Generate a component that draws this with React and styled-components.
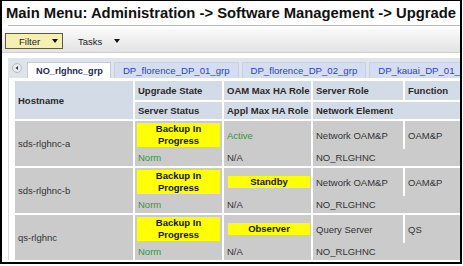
import React from "react";
import styled, { createGlobalStyle } from "styled-components";

const rows = [
  { host: "sds-rlghnc-a", role: "Active", serverRole: "Network OAM&P", fn: "OAM&P" },
  { host: "sds-rlghnc-b", role: "Standby", serverRole: "Network OAM&P", fn: "OAM&P" },
  { host: "qs-rlghnc", role: "Observer", serverRole: "Query Server", fn: "QS" },
];

const tabs = ["NO_rlghnc_grp", "DP_florence_DP_01_grp", "DP_florence_DP_02_grp", "DP_kauai_DP_01_grp"];

const GlobalStyle = createGlobalStyle`
  html, body { margin: 0; padding: 0; background: #fff; }
  body { font-family: "Liberation Sans", Arial, sans-serif; }
`;

const Frame = styled.div`
  width: 462px;
  height: 264px;
  box-sizing: border-box;
  border: 2px solid #000;
  border-top-width: 1px;
  overflow: hidden;
  background: #fff;
`;

const Title = styled.h1`
  margin: 0;
  padding: 3px 0 0 4px;
  font-size: 14.8px;
  line-height: 18px;
  font-weight: bold;
  color: #111;
  white-space: nowrap;
`;

const Rule = styled.div`
  margin: 3px 0 0 6px;
  height: 1px;
  background: #b8b8b8;
`;

const Toolbar = styled.div`
  margin-top: 2px;
  height: 25px;
  display: flex;
  align-items: flex-start;
  padding: 5px 0 0 3px;
  box-sizing: border-box;
  background: linear-gradient(#fbfbfb, #e3e3e3);
  border-bottom: 1px solid #cfcfcf;
`;

const MenuButton = styled.div`
  display: flex;
  align-items: center;
  gap: 12px;
  height: 16px;
  box-sizing: border-box;
  font-size: 9.5px;
  color: #222;
  padding-left: ${(p) => (p.$active ? "13px" : "0")};
  width: ${(p) => (p.$active ? "58px" : "auto")};
  margin-left: ${(p) => (p.$active ? "0" : "14px")};
  background: ${(p) => (p.$active ? "#f6efb3" : "transparent")};
  border: ${(p) => (p.$active ? "1px solid #5d5a3c" : "1px solid transparent")};
`;

const Caret = styled.span`
  width: 0;
  height: 0;
  border-left: 3px solid transparent;
  border-right: 3px solid transparent;
  border-top: 4px solid #111;
`;

const TabStrip = styled.div`
  margin: 5px 0 0 6px;
  height: 20px;
  display: flex;
  align-items: flex-end;
  gap: 3px;
  padding-left: 4px;
  background: #dfe3ea;
  white-space: nowrap;
`;

const ScrollButton = styled.div`
  align-self: center;
  width: 10px;
  height: 10px;
  margin-right: 2px;
  display: flex;
`;

const Tab = styled.div`
  height: 16px;
  box-sizing: border-box;
  padding: ${(p) => (p.$active ? "0 7px 0 8px" : "0 8px")};
  display: flex;
  align-items: center;
  flex-shrink: 0;
  font-size: ${(p) => (p.$active ? "9.2px" : "9.6px")};
  font-weight: ${(p) => (p.$active ? "bold" : "normal")};
  color: ${(p) => (p.$active ? "#1e2b55" : "#2b3fcf")};
  background: ${(p) => (p.$active ? "#fff" : "#d5ddf1")};
  border: 1px solid ${(p) => (p.$active ? "#c3cbdb" : "#c6d0e6")};
  border-bottom: none;
`;

const Panel = styled.div`
  margin-left: 6px;
  padding: 3px 0 0 6px;
  border-left: 1px solid #d4d9e2;
`;

const Table = styled.div`
  display: flex;
  flex-direction: column;
  gap: 2px;
  width: 600px;
  font-size: 9.5px;
  color: #333;
`;

const Grid = styled.div`
  display: grid;
  grid-template-columns: 118px 87px 87px 90px 90px;
  grid-template-rows: ${(p) => (p.$head ? "19px 17px" : "28px 17px")};
  column-gap: 2px;
  row-gap: ${(p) => (p.$head ? "2px" : "0")};
`;

const HeadCell = styled.div`
  background: #d3dbe6;
  font-weight: bold;
  color: #2a2a2a;
  display: flex;
  align-items: center;
  padding-left: 3px;
  white-space: nowrap;
  grid-row: ${(p) => p.$row || "auto"};
  grid-column: ${(p) => p.$col || "auto"};
`;

const Cell = styled.div`
  background: #cbcbcb;
  display: flex;
  align-items: center;
  padding-left: 3px;
  white-space: nowrap;
  color: ${(p) => (p.$green ? "#36963a" : "#333")};
  grid-row: ${(p) => p.$row || "auto"};
  grid-column: ${(p) => p.$col || "auto"};
`;

const BoxCell = styled(Cell)`
  padding: 0;
`;

const Highlight = styled.div`
  background: #ffff00;
  color: #111;
  font-weight: bold;
  text-align: center;
  line-height: 12px;
  flex: 1;
  margin: ${(p) => (p.$wide ? "0 2px 0 2px" : "0 1px 0 4px")};
  height: ${(p) => (p.$wide ? "24px" : "12px")};
`;

function LeftArrow() {
  return (
    <svg width="10" height="10" viewBox="0 0 10 10">
      <circle cx="5" cy="5" r="4.5" fill="#e9ebef" stroke="#aab0bc" strokeWidth="0.8" />
      <path d="M6 3 L3.6 5 L6 7 Z" fill="#333" />
    </svg>
  );
}

export default function App() {
  return (
    <>
      <GlobalStyle />
      <Frame>
        <Title>Main Menu: Administration -&gt; Software Management -&gt; Upgrade</Title>
        <Rule />
        <Toolbar>
          <MenuButton $active>
            Filter <Caret />
          </MenuButton>
          <MenuButton>
            Tasks <Caret />
          </MenuButton>
        </Toolbar>
        <TabStrip>
          <ScrollButton>
            <LeftArrow />
          </ScrollButton>
          {tabs.map((t, i) => (
            <Tab key={t} $active={i === 0}>
              {t}
            </Tab>
          ))}
        </TabStrip>
        <Panel>
          <Table>
            <Grid $head>
              <HeadCell $row="1 / 3">Hostname</HeadCell>
              <HeadCell>Upgrade State</HeadCell>
              <HeadCell>OAM Max HA Role</HeadCell>
              <HeadCell>Server Role</HeadCell>
              <HeadCell>Function</HeadCell>
              <HeadCell $col="2">Server Status</HeadCell>
              <HeadCell $col="3">Appl Max HA Role</HeadCell>
              <HeadCell $col="4 / 6">Network Element</HeadCell>
            </Grid>
            {rows.map((r) => (
              <Grid key={r.host}>
                <Cell $row="1 / 3">{r.host}</Cell>
                <BoxCell>
                  <Highlight $wide>
                    Backup In
                    <br />
                    Progress
                  </Highlight>
                </BoxCell>
                {r.role === "Active" ? (
                  <Cell $green>Active</Cell>
                ) : (
                  <BoxCell>
                    <Highlight>{r.role}</Highlight>
                  </BoxCell>
                )}
                <Cell>{r.serverRole}</Cell>
                <Cell>{r.fn}</Cell>
                <Cell $col="2" $green>
                  Norm
                </Cell>
                <Cell $col="3">N/A</Cell>
                <Cell $col="4 / 6">NO_RLGHNC</Cell>
              </Grid>
            ))}
          </Table>
        </Panel>
      </Frame>
    </>
  );
}
